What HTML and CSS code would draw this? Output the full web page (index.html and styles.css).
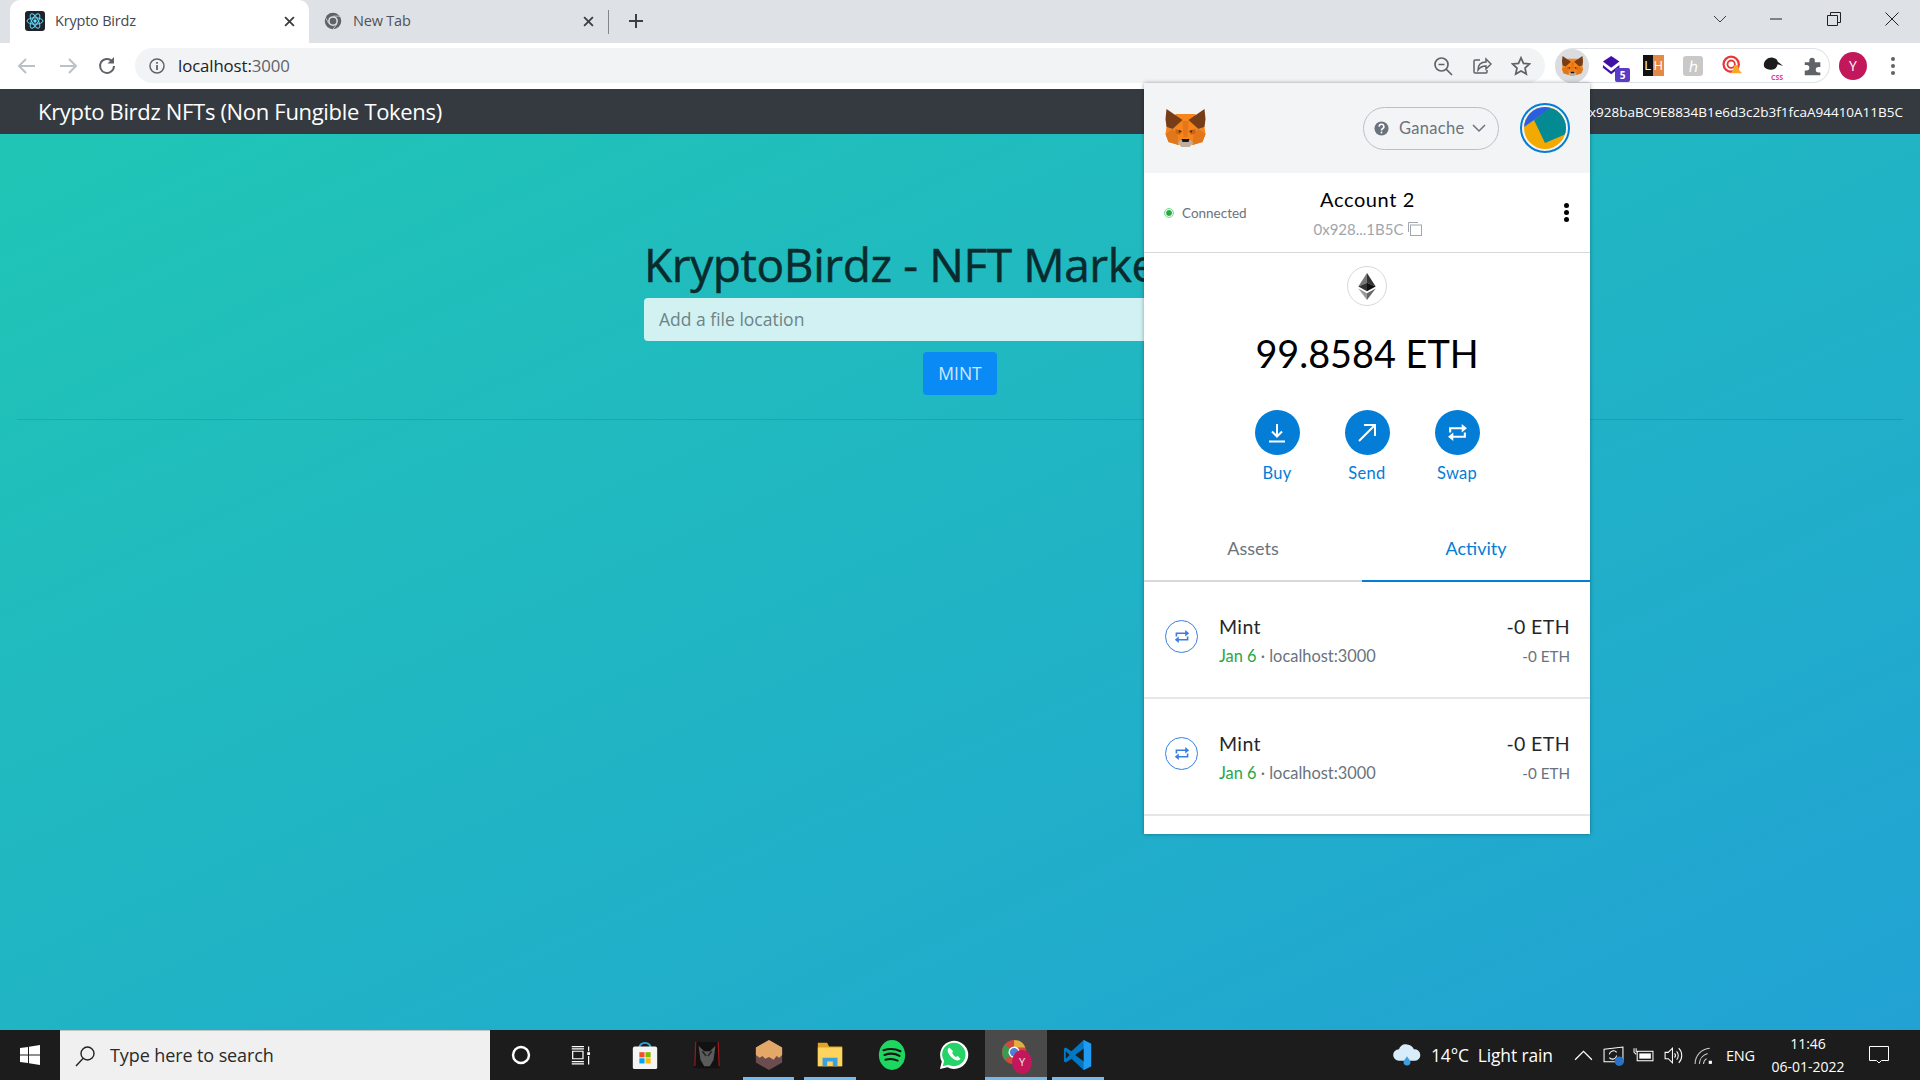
FILE: index.html
```html
<!DOCTYPE html>
<html lang="en">
<head>
<meta charset="utf-8">
<title>Krypto Birdz</title>
<link rel="stylesheet" href="styles.css">
</head>
<body>
<svg class="defs" width="0" height="0">
  <symbol id="fox" viewBox="0 0 40 38">
    <polygon fill="#f6851b" points="10,5 30,5 33,20 39,18 40,25 37,33 27,36 24,31 16,31 13,36 3,33 0,25 1,18 7,20"/>
    <polygon fill="#763d16" points="1,0 17,11 7,20 1,18 0,10"/>
    <polygon fill="#763d16" points="39,0 23,11 33,20 39,18 40,10"/>
    <polygon fill="#e2761b" points="0,25 7,20 12,25 13,36 3,33"/>
    <polygon fill="#e2761b" points="40,25 33,20 28,25 27,36 37,33"/>
    <polygon fill="#cd6116" points="10,20 17,22 14,26 10,24"/>
    <polygon fill="#cd6116" points="30,20 23,22 26,26 30,24"/>
    <polygon fill="#233447" points="13,21 16,22 14,24"/>
    <polygon fill="#233447" points="27,21 24,22 26,24"/>
    <polygon fill="#e4761b" points="17,12 23,12 22,28 18,28"/>
    <polygon fill="#c0ad9e" points="12,34 16,30 24,30 28,34 24,38 16,38"/>
    <polygon fill="#161616" points="16,30 24,30 23,33 17,33"/>
  </symbol>
  <symbol id="swap" viewBox="2 3 20 18">
    <path d="M5 12V8h12M19 12v4H7" fill="none" stroke="currentColor" stroke-width="2"/>
    <path d="M16 4l5 4-5 4zM8 12l-5 4 5 4z" fill="currentColor"/>
  </symbol>
  <symbol id="chrome" viewBox="0 0 24 24">
    <circle cx="12" cy="12" r="11" fill="#5f6368"/>
    <circle cx="12" cy="12" r="6.500" fill="#dee1e6"/>
    <circle cx="12" cy="12" r="4.500" fill="#5f6368"/>
    <path d="M12 5.500h10M6.500 15.500L1.800 7M17.500 15.500L12 23" stroke="#dee1e6" stroke-width="1"/>
  </symbol>
</svg>

<div class="tabstrip">
  <div class="tab tab-active">
    <svg class="favicon" viewBox="0 0 20 20"><rect width="20" height="20" rx="3" fill="#20232a"/><g fill="none" stroke="#61dafb" stroke-width="1"><ellipse cx="10" cy="10" rx="8" ry="3.200"/><ellipse cx="10" cy="10" rx="8" ry="3.200" transform="rotate(60 10 10)"/><ellipse cx="10" cy="10" rx="8" ry="3.200" transform="rotate(120 10 10)"/></g><circle cx="10" cy="10" r="1.700" fill="#61dafb"/></svg>
    <span class="tab-title">Krypto Birdz</span>
    <svg class="tab-x" viewBox="0 0 10 10"><path d="M1 1l8 8M9 1l-8 8" stroke="#3c4043" stroke-width="1.700"/></svg>
  </div>
  <div class="tab">
    <svg class="favicon favicon-chrome"><use href="#chrome"/></svg>
    <span class="tab-title tab-title-dim">New Tab</span>
    <svg class="tab-x" viewBox="0 0 10 10"><path d="M1 1l8 8M9 1l-8 8" stroke="#3c4043" stroke-width="1.700"/></svg>
  </div>
  <div class="tab-sep"></div>
  <svg class="new-tab" viewBox="0 0 14 14"><path d="M7 0v14M0 7h14" stroke="#3c4043" stroke-width="2"/></svg>
  <div class="win-controls">
    <svg class="win-icon" viewBox="0 0 14 14"><path d="M1 4l6 6 6-6" fill="none" stroke="#3c4043"/></svg>
    <svg class="win-icon win-min" viewBox="0 0 14 14"><path d="M1 7h12" stroke="#222"/></svg>
    <svg class="win-icon win-max" viewBox="0 0 14 14"><path d="M.5 3.500h10v10H.5zM3.500 3.500V.5h10v10h-3" fill="none" stroke="#222"/></svg>
    <svg class="win-icon win-close" viewBox="0 0 14 14"><path d="M.5.5l13 13M13.500.5l-13 13" stroke="#222"/></svg>
  </div>
</div>

<div class="toolbar">
  <svg class="nav-icon" viewBox="0 0 24 24"><path d="M20 12H5M11 5l-7 7 7 7" fill="none" stroke="#bdc1c6" stroke-width="2"/></svg>
  <svg class="nav-icon nav-forward" viewBox="0 0 24 24"><path d="M4 12h15M13 5l7 7-7 7" fill="none" stroke="#bdc1c6" stroke-width="2"/></svg>
  <svg class="nav-icon nav-reload" viewBox="0 0 24 24"><path d="M19 12a7 7 0 1 1-2-5" fill="none" stroke="#5f6368" stroke-width="2"/><path d="M19 3v6.500h-6.500z" fill="#5f6368"/></svg>
  <div class="omnibox">
    <svg class="info-icon" viewBox="0 0 16 16"><circle cx="8" cy="8" r="7" fill="none" stroke="#5f6368" stroke-width="1.500"/><path d="M8 7v5M8 4v1.800" stroke="#5f6368" stroke-width="1.800"/></svg>
    <span class="url">localhost:<span class="url-dim">3000</span></span>
    <div class="omni-actions">
      <svg class="omni-icon" viewBox="0 0 20 20"><circle cx="8.500" cy="8.500" r="6.500" fill="none" stroke="#5f6368" stroke-width="1.700"/><path d="M13 13l6 6M5.500 8.500h6" stroke="#5f6368" stroke-width="1.700"/></svg>
      <svg class="omni-icon" viewBox="0 0 20 20"><path d="M14 3l5 5-5 5v-3c-4 0-6 1-8 4 0-5 3-8 8-8zM8 4H3a1 1 0 0 0-1 1v11a1 1 0 0 0 1 1h11a1 1 0 0 0 1-1v-2" fill="none" stroke="#5f6368" stroke-width="1.500"/></svg>
      <svg class="omni-icon" viewBox="0 0 20 20"><path d="M10 1.800l2.500 5.600 6 .6-4.500 4 1.300 6L10 15l-5.300 3 1.300-6-4.500-4 6-.6z" fill="none" stroke="#5f6368" stroke-width="1.700"/></svg>
    </div>
  </div>
  <div class="ext-pill">
    <div class="ext ext-mm"><svg class="ext-fox"><use href="#fox"/></svg></div>
    <div class="ext">
      <svg class="ext-svg" viewBox="0 0 24 24"><path d="M10 1l9 6-9 7-9-7z" fill="#3f0fa8"/><path d="M1 11l9 7 9-7v3l-9 7-9-7z" fill="#3f0fa8"/></svg>
      <span class="badge-five">5</span>
    </div>
    <div class="ext"><div class="lh"><span class="lh-l">L</span><span class="lh-h">H</span></div></div>
    <div class="ext"><span class="kay">ℎ</span></div>
    <div class="ext">
      <svg class="ext-svg" viewBox="0 0 24 24"><circle cx="10" cy="10" r="9.500" fill="#e53935"/><circle cx="10" cy="10" r="7" fill="#fff"/><circle cx="10" cy="10" r="5" fill="#e53935"/><circle cx="10" cy="10" r="3" fill="#fff"/><path d="M15 11c3 0 3 3 4 6l3 3H9l3-3c1-3 0-6 3-6z" fill="#f9a825"/></svg>
    </div>
    <div class="ext">
      <svg class="ext-svg" viewBox="0 0 24 24"><path d="M2 11C2 6 7 2 12 3c4 1 5 3 5 4l6 5-6-2c-1 5-4 6-8 6-4 0-7-2-7-5z" fill="#1c1c1c"/></svg>
      <span class="css-tag">CSS</span>
    </div>
    <div class="ext"><svg class="ext-svg" viewBox="0 0 24 24"><path d="M3 8h5V6a3 3 0 0 1 6 0v2h6v5h-2a3 3 0 0 0 0 6h2v3H3v-5h2a3 3 0 0 0 0-6H3z" fill="#5f6368"/></svg></div>
  </div>
  <div class="profile">Y</div>
  <div class="kebab"><i></i><i></i><i></i></div>
</div>

<nav class="navbar">
  <span class="brand">Krypto Birdz NFTs (Non Fungible Tokens)</span>
  <span class="acct">0x928baBC9E8834B1e6d3c2b3f1fcaA94410A11B5C</span>
</nav>

<main class="main">
  <div class="mint-form">
    <h1 class="title">KryptoBirdz - NFT Marketplace</h1>
    <div class="file-input">Add a file location</div>
    <div class="btn-row"><button class="mint-btn">MINT</button></div>
  </div>
  <hr class="rule">
</main>

<div class="taskbar">
  <div class="start"><svg class="win-logo" viewBox="0 0 20 20"><path d="M0 3l8-1v7.500H0zM9 1.800L20 0v9.500H9zM0 10.500h8V18l-8-1zM9 10.500h11V20L9 18.300z" fill="#fff"/></svg></div>
  <div class="search">
    <svg class="search-icon" viewBox="0 0 22 22"><circle cx="13.500" cy="8.500" r="6.500" fill="none" stroke="#222" stroke-width="1.400"/><path d="M9 13.500L2 21" stroke="#222" stroke-width="1.400"/></svg>
    <span>Type here to search</span>
  </div>
  <div class="task"><svg class="task-svg" viewBox="0 0 32 32"><circle cx="16" cy="16" r="8.500" fill="none" stroke="#fff" stroke-width="2.600"/></svg></div>
  <div class="task"><svg class="task-svg" viewBox="2 0 32 32"><path d="M6 7h13M6 9.500h13M6 23h13M6 25.500h13M7 12h11v8H7zM24 7v5M24 17v9" fill="none" stroke="#fff" stroke-width="1.300"/><rect x="22.500" y="13" width="3" height="3" fill="#fff"/></svg></div>
  <div class="task"><svg class="task-svg" viewBox="0 0 32 32"><path d="M10 8a6 5 0 0 1 12 0" fill="none" stroke="#29a8e0" stroke-width="2"/><rect x="3" y="7" width="26" height="24" rx="2" fill="#f4f4f4"/><rect x="10" y="13" width="5.500" height="5.500" fill="#f25022"/><rect x="16.500" y="13" width="5.500" height="5.500" fill="#7fba00"/><rect x="10" y="19.500" width="5.500" height="5.500" fill="#00a4ef"/><rect x="16.500" y="19.500" width="5.500" height="5.500" fill="#ffb900"/></svg></div>
  <div class="task"><svg class="task-svg" viewBox="0 0 32 32"><path d="M4 2h24l2 28H2z" fill="#111"/><path d="M4 2l-1 26M28 2l1 26" stroke="#a01818" stroke-width="1.300"/><path d="M7 6l6 6h6l6-6-2 15-4 7h-6l-4-7z" fill="#5b5b5b"/><path d="M11 12l4 5M21 12l-4 5" stroke="#222" stroke-width="1.500"/></svg></div>
  <div class="task task-open"><svg class="task-svg" viewBox="0 0 32 32"><path d="M16 0l14 8v16l-14 8L2 24V8z" fill="#6d4c4f"/><path d="M16 0l14 8v8l-3 3-3-2-3 4-5-3-4 2-3-3-3 2-4-3V8z" fill="#e3a868"/></svg></div>
  <div class="task task-open"><svg class="task-svg" viewBox="0 0 32 32"><path d="M3 3h10l2 4h14v21H3z" fill="#e0a526"/><rect x="3" y="8" width="26" height="20" fill="#ffd45e"/><path d="M8 28v-9h16v9h-5v-5h-6v5z" fill="#3b9fe0"/></svg></div>
  <div class="task"><svg class="task-svg" viewBox="0 0 32 32"><ellipse cx="16" cy="16" rx="14" ry="16" fill="#1ed760"/><path d="M7 11c6-2 12-2 18 1M8 16c5-2 11-2 16 1M9 21c4-1 9-1 13 1" fill="none" stroke="#191414" stroke-width="2.200" stroke-linecap="round"/></svg></div>
  <div class="task"><svg class="task-svg" viewBox="0 0 32 32"><path d="M1 31l2-8A15 15 0 1 1 9 29z" fill="#fff"/><path d="M4 28l1.500-5.500A12.500 12.500 0 1 1 10 26.500z" fill="#25d366"/><path d="M11 8c-3 2-2 6 2 10s8 5 10 2l-3-3-2 1c-2-1-3-3-4-4l1-2z" fill="#fff"/></svg></div>
  <div class="task task-open task-active"><svg class="task-svg" viewBox="0 0 32 32"><circle cx="14" cy="13" r="13" fill="#d04a3c"/><path d="M14 13L4 21A13 13 0 0 1 4 5z" fill="#3a9a50"/><path d="M14 0a13 13 0 0 1 12 8H14z" fill="#e0b040"/><circle cx="14" cy="13" r="6" fill="#fff"/><circle cx="14" cy="13" r="4.500" fill="#4a80d8"/></svg><span class="chrome-y">Y</span></div>
  <div class="task task-open"><svg class="task-svg" viewBox="0 0 32 32"><path d="M22 0l8 4v24l-8 4-13-12-6 4-2-1V9l2-1 6 4z" fill="#0078c4"/><path d="M22 0l8 4v24l-8 4z" fill="#1f9cf0"/><path d="M22 9l-9 7 9 7z" fill="#1c1c1c"/><path d="M3 12v8l4-4z" fill="#1c1c1c"/></svg></div>
  <div class="tray">
    <svg class="cloud" viewBox="0 0 26 20"><path d="M6 15a5 5 0 0 1 0-10c1-3 4-5 7-4 3 0 5 2 6 4a5 5 0 0 1 1 10z" fill="#d9ecfa"/><path d="M13 11c2 3 3 4 3 5a3 3 0 0 1-6 0c0-1 1-2 3-5z" fill="#3d9fe0"/></svg>
    <span class="weather">14°C&nbsp; Light rain</span>
    <div class="tray-slot"><svg class="tray-svg" viewBox="0 0 20 20"><path d="M2 14l8-8 8 8" fill="none" stroke="#fff" stroke-width="1.200"/></svg></div>
    <div class="tray-slot"><svg class="tray-svg" viewBox="0 0 20 20"><path d="M1 4l18-2v14H1z" fill="none" stroke="#fff"/><path d="M6 9a4 4 0 0 1 7-2M13 10a4 4 0 0 1-7 2" fill="none" stroke="#fff"/><circle cx="15.500" cy="15.500" r="4.500" fill="#2a72c8"/></svg></div>
    <div class="tray-slot"><svg class="tray-svg" viewBox="0 0 20 20"><rect x="4" y="6" width="15" height="9" fill="none" stroke="#fff"/><rect x="6" y="8" width="11" height="5" fill="#fff"/><path d="M1 3v4l2 2M3 3v4" stroke="#fff"/></svg></div>
    <div class="tray-slot"><svg class="tray-svg" viewBox="0 0 20 20"><path d="M2 7h3l4-4v14l-4-4H2z" fill="none" stroke="#fff"/><path d="M11 8a3 3 0 0 1 0 4M13 6a6 6 0 0 1 0 8M15 3a10 10 0 0 1 0 14" fill="none" stroke="#fff"/></svg></div>
    <div class="tray-slot"><svg class="tray-svg" viewBox="0 0 20 20"><path d="M2 18A15 15 0 0 1 16 3M6 18A11 11 0 0 1 14 8M10 18a6 6 0 0 1 3-5" fill="none" stroke="#ccc"/><rect x="15" y="15" width="3" height="3" fill="#fff"/></svg></div>
    <span class="lang">ENG</span>
    <div class="clock"><span>11:46</span><span>06-01-2022</span></div>
    <div class="tray-slot notif"><svg class="notif-svg" viewBox="0 0 20 20"><path d="M.5 1.500h19v14h-7l-2.500 2.500-2.500-2.500h-7z" fill="none" stroke="#fff"/></svg></div>
  </div>
</div>

<aside class="popup">
  <header class="mm-head">
    <svg class="mm-fox"><use href="#fox"/></svg>
    <div class="network">
      <svg class="q-icon" viewBox="0 0 16 16"><circle cx="8" cy="8" r="7.500" fill="#6a737d"/><path d="M5.500 6a2.500 2.500 0 1 1 3.500 2.300c-.7.4-1 .8-1 1.700" fill="none" stroke="#fff" stroke-width="1.700"/><circle cx="8" cy="12.300" r="1" fill="#fff"/></svg>
      <span>Ganache</span>
      <svg class="net-chev" viewBox="0 0 14 9"><path d="M1 1l6 6 6-6" fill="none" stroke="#6a737d" stroke-width="1.500"/></svg>
    </div>
    <div class="identicon-ring">
      <svg class="identicon" viewBox="0 0 42 42"><rect width="42" height="42" fill="#f2aa03"/><polygon points="0,0 28,0 10,13 0,20" fill="#2a5fe0"/><polygon points="10,13 26,1 44,5 42,27 21,36" fill="#038a92"/></svg>
    </div>
  </header>
  <section class="mm-acct">
    <div class="conn"><span class="conn-dot"></span>Connected</div>
    <div class="acct-mid">
      <div class="acct-name">Account 2</div>
      <div class="acct-addr">0x928...1B5C<svg class="copy" viewBox="0 0 14 14"><path d="M.5 10V.5H10" fill="none" stroke="#9fa6ae"/><rect x="2.500" y="3" width="11" height="10.500" fill="none" stroke="#9fa6ae"/></svg></div>
    </div>
    <div class="acct-menu"><i></i><i></i><i></i></div>
  </section>
  <section class="mm-bal">
    <div class="eth-badge"><svg class="eth" viewBox="0 0 18 28"><polygon points="9,0 0,14 9,10" fill="#777"/><polygon points="9,0 18,14 9,10" fill="#333"/><polygon points="0,14 9,19 9,10" fill="#333"/><polygon points="18,14 9,19 9,10" fill="#111"/><polygon points="0,16 9,28 9,21" fill="#999"/><polygon points="18,16 9,28 9,21" fill="#666"/></svg></div>
    <div class="balance">99.8584 ETH</div>
    <div class="actions">
      <div class="action"><span class="action-btn"><svg class="action-svg" viewBox="0 0 24 24"><path d="M12 3v12M7 10.500l5 5 5-5M4 20.500h16" fill="none" stroke="#fff" stroke-width="2"/></svg></span><span>Buy</span></div>
      <div class="action"><span class="action-btn"><svg class="action-svg" viewBox="0 0 24 24"><path d="M4 20L20 4M9 4h11v11" fill="none" stroke="#fff" stroke-width="2"/></svg></span><span>Send</span></div>
      <div class="action"><span class="action-btn"><svg class="action-swap"><use href="#swap"/></svg></span><span>Swap</span></div>
    </div>
  </section>
  <div class="mm-tabs">
    <div class="mm-tab">Assets</div>
    <div class="mm-tab mm-tab-on">Activity</div>
  </div>
  <div class="tx">
    <span class="tx-icon"><svg class="tx-swap"><use href="#swap"/></svg></span>
    <div class="tx-main"><div class="tx-title">Mint</div><div class="tx-sub"><span class="tx-date">Jan 6</span> · localhost:3000</div></div>
    <div class="tx-amt"><div class="tx-title">-0 ETH</div><div class="tx-sub">-0 ETH</div></div>
  </div>
  <div class="tx">
    <span class="tx-icon"><svg class="tx-swap"><use href="#swap"/></svg></span>
    <div class="tx-main"><div class="tx-title">Mint</div><div class="tx-sub"><span class="tx-date">Jan 6</span> · localhost:3000</div></div>
    <div class="tx-amt"><div class="tx-title">-0 ETH</div><div class="tx-sub">-0 ETH</div></div>
  </div>
</aside>
</body>
</html>
```

FILE: styles.css
```css
* { box-sizing: border-box; }
html, body { margin: 0; padding: 0; }
body {
  position: relative;
  width: 1920px;
  height: 1080px;
  overflow: hidden;
  display: flex;
  flex-direction: column;
  font-family: "Open Sans", "Liberation Sans", sans-serif;
  background: #fff;
}
.defs { position: absolute; }

/* tab strip */
.tabstrip { height: 43px; flex: none; display: flex; align-items: center; padding-left: 10px; background: #dee1e6; }
.tab { width: 299px; height: 43px; flex: none; display: flex; align-items: center; padding: 0 14px 0 15px; }
.tab-active { background: #fff; border-radius: 10px 10px 0 0; }
.favicon { width: 20px; height: 20px; flex: none; margin-right: 10px; margin-bottom: 1px; }
.favicon-chrome { width: 18px; height: 18px; margin-right: 11px; }
.tab-title { font-size: 14.500px; line-height: 18px; color: #45494d; flex: 1; letter-spacing: -.2px; margin-bottom: 2px; }
.tab-title-dim { color: #4f5357; }
.tab-x { width: 11px; height: 11px; flex: none; }
.tab-sep { width: 1px; height: 24px; background: #80868b; flex: none; }
.new-tab { width: 14px; height: 14px; flex: none; margin-left: 20px; margin-bottom: 1px; }
.win-controls { margin-left: auto; display: flex; align-items: center; padding-right: 21px; }
.win-icon { width: 14px; height: 14px; flex: none; margin-bottom: 6px; }
.win-min { margin-left: 42px; }
.win-max { margin-left: 44px; }
.win-close { margin-left: 44px; }

/* toolbar */
.toolbar { height: 46px; flex: none; display: flex; align-items: center; padding: 0 0 1px 15px; background: #fff; }
.nav-icon { width: 24px; height: 24px; flex: none; }
.nav-forward { margin-left: 17px; }
.nav-reload { margin-left: 15px; }
.omnibox { width: 1410px; height: 35px; margin-left: 16px; flex: none; display: flex; align-items: center; padding: 0 14px 0 14px; background: #f1f3f4; border-radius: 18px; }
.info-icon { width: 16px; height: 16px; flex: none; }
.url { margin-left: 13px; font-size: 16.800px; color: #202124; letter-spacing: -.1px; }
.url-dim { color: #5f6368; }
.omni-actions { margin-left: auto; display: flex; gap: 19px; }
.omni-icon { width: 20px; height: 20px; }
.ext-pill { width: 275px; height: 35px; margin-left: 10px; flex: none; display: flex; align-items: center; border: 1px solid #dee1e6; border-left: 0; border-radius: 18px; }
.ext { position: relative; width: 40px; height: 33px; flex: none; display: flex; align-items: center; justify-content: center; }
.ext-mm { width: 34px; height: 34px; margin-right: 4px; border-radius: 50%; background: #dadce0; }
.ext-fox { width: 21px; height: 20px; }
.ext-svg { width: 22px; height: 22px; }
.badge-five { position: absolute; right: 3px; bottom: 0; width: 15px; height: 14px; border-radius: 2px; background: #5b3cc4; color: #fff; font-size: 10px; font-weight: 700; line-height: 14px; text-align: center; }
.lh { width: 21px; height: 21px; display: flex; font-size: 13px; line-height: 21px; text-align: center; }
.lh-l { flex: 1; background: #111; color: #fff; }
.lh-h { flex: 1; background: #e58a45; color: #fff; }
.kay { width: 20px; height: 20px; border-radius: 3px; background: #c8c8c8; color: #fff; font-size: 15px; line-height: 20px; text-align: center; }
.css-tag { position: absolute; left: 18px; bottom: 1px; color: #e8368f; font-size: 7px; font-weight: 700; line-height: 7px; }
.profile { width: 28px; height: 28px; margin-left: 9px; flex: none; border-radius: 50%; background: #c2185b; color: #fff; font-size: 14px; line-height: 28px; text-align: center; }
.kebab { margin-left: 24px; display: flex; flex-direction: column; gap: 3px; }
.kebab i { width: 4px; height: 4px; border-radius: 50%; background: #5f6368; }

/* page nav */
.navbar { height: 45px; flex: none; display: flex; align-items: center; justify-content: space-between; padding: 0 17px 0 38px; background: #343a40; color: #fff; }
.brand { font-size: 22px; letter-spacing: -.32px; margin-bottom: 2px; }
.acct { font-size: 13.500px; }

/* page body */
.main { flex: 1; padding: 104px 17px 0; background: linear-gradient(to bottom right, #20c6b5, #21a2d4); }
.mint-form { width: 632px; margin: 0 auto; }
.title { margin: 0 0 7px; font-size: 46px; font-weight: 400; -webkit-text-stroke: .5px #0a2b2d; line-height: 53px; color: #0a2b2d; white-space: nowrap; letter-spacing: -.4px; }
.file-input { height: 43px; padding: 0 15px; border-radius: 4px; background: rgba(255, 255, 255, .8); color: #6c8387; font-size: 17.500px; line-height: 42px; }
.btn-row { margin-top: 11px; display: flex; justify-content: center; }
.mint-btn { width: 74px; height: 43px; padding: 0 0 2px; border: 0; border-radius: 4px; background: #0a8af5; color: #cfe8fd; font: 17.500px "Open Sans", sans-serif; }
.rule { margin: 24px 0 0; border: 0; border-top: 1px solid rgba(0, 0, 0, .1); }

/* windows taskbar */
.taskbar { height: 50px; flex: none; display: flex; background: #1c1c1c; color: #fff; }
.start { width: 60px; display: flex; align-items: center; justify-content: center; }
.win-logo { width: 20px; height: 24px; }
.search { width: 430px; display: flex; align-items: center; padding-left: 14px; background: #f0f0f0; border: 1px solid #c4c4c4; border-width: 1px 0 0; color: #2a2a2a; font-size: 18px; letter-spacing: -.1px; }
.search span { margin-bottom: 2px; }
.search-icon { width: 22px; height: 22px; margin-right: 14px; }
.task { position: relative; width: 61.900px; flex: none; display: flex; align-items: center; justify-content: center; }
.task-svg { width: 30px; height: 34px; }
.task-open::after { content: ""; position: absolute; left: 5px; right: 5px; bottom: 0; height: 3px; background: #76b9ed; }
.task-active { background: #4a4a4a; }
.task-active::after { left: 0; right: 0; }
.chrome-y { position: absolute; left: 27px; top: 20px; width: 20px; height: 24px; border-radius: 50%; background: #c2185b; color: #eee; font-size: 11px; line-height: 24px; text-align: center; }
.tray { margin-left: auto; display: flex; align-items: center; padding-right: 26px; box-shadow: 4px 0 0 -3px #333; }
.cloud { width: 30px; height: 24px; margin-right: 11px; }
.weather { width: 135px; font-size: 17.400px; letter-spacing: -.1px; margin-left: -2px; margin-right: 2px; white-space: nowrap; }
.tray-slot { width: 30px; display: flex; justify-content: center; }
.tray-svg { width: 21px; height: 21px; }
.lang { width: 28px; margin-left: 8px; font-size: 14.500px; letter-spacing: -.2px; }
.clock { width: 76px; margin-left: 16px; display: flex; flex-direction: column; align-items: center; gap: 5px; font-size: 14px; line-height: 18px; }
.notif { margin-left: 18px; }
.notif-svg { width: 20px; height: 20px; }

/* wallet popup */
.popup { position: absolute; left: 1144px; top: 83px; width: 446px; height: 751px; background: #fff; font-family: Lato, "Liberation Sans", sans-serif; box-shadow: 0 0 4px rgba(0, 0, 0, .35); color: #24272a; }
.mm-head { height: 90px; display: flex; align-items: center; padding: 0 20px 0 21px; background: #f2f4f6; }
.mm-fox { width: 41px; height: 38px; flex: none; }
.network { width: 136px; height: 43px; margin-left: auto; display: flex; align-items: center; padding: 0 12px 0 10px; border: 1px solid #bbc0c5; border-radius: 22px; color: #6a737d; font-size: 16.500px; }
.network span { margin-left: 10px; letter-spacing: .3px; }
.q-icon { width: 15px; height: 15px; flex: none; }
.net-chev { width: 14px; height: 9px; margin-left: auto; }
.identicon-ring { width: 50px; height: 50px; margin-left: 21px; flex: none; display: flex; align-items: center; justify-content: center; border: 2px solid #037dd6; border-radius: 50%; }
.identicon { width: 42px; height: 42px; border-radius: 50%; }
.mm-acct { height: 80px; display: grid; grid-template-columns: 1fr auto 1fr; align-items: center; padding: 0 20px 0 21px; border-bottom: 1px solid #d6d9dc; }
.conn { display: flex; align-items: center; color: #6a737d; font-size: 13.500px; }
.conn-dot { width: 8px; height: 8px; margin: 0 9px 0 0; border-radius: 50%; background: #28a745; border: 1.500px solid #fff; outline: 1.500px solid #6fe08f; }
.acct-mid { text-align: center; }
.acct-name { font-size: 20px; line-height: 24px; color: #000; letter-spacing: .6px; }
.acct-addr { display: flex; align-items: center; margin-top: 9px; color: #9fa6ae; font-size: 15px; line-height: 18px; }
.copy { width: 14px; height: 14px; margin-left: 4px; }
.acct-menu { justify-self: end; display: flex; flex-direction: column; gap: 2px; margin-right: 1px; }
.acct-menu i { width: 5px; height: 5px; border-radius: 50%; background: #000; }
.mm-bal { height: 263px; display: flex; flex-direction: column; align-items: center; padding-top: 13px; }
.eth-badge { width: 40px; height: 40px; display: flex; align-items: center; justify-content: center; border: 1px solid #d6d9dc; border-radius: 50%; }
.eth { width: 18px; height: 27px; }
.balance { margin-top: 23px; font-size: 37.800px; line-height: 50px; color: #000; }
.actions { margin-top: 31px; display: flex; }
.action { width: 90px; display: flex; flex-direction: column; align-items: center; gap: 6px; color: #037dd6; font-size: 16.500px; line-height: 24px; letter-spacing: .3px; }
.action-btn { width: 45px; height: 45px; display: flex; align-items: center; justify-content: center; border-radius: 50%; background: #037dd6; }
.action-svg { width: 24px; height: 24px; }
.action-swap { width: 21px; height: 19px; color: #fff; }
.mm-tabs { height: 66px; display: grid; grid-template-columns: 218px 1fr; border-bottom: 2px solid #d6d9dc; }
.mm-tab { margin-bottom: -2px; text-align: center; line-height: 64px; font-size: 18px; color: #6a737d; }
.mm-tab-on { color: #037dd6; border-bottom: 2px solid #037dd6; }
.tx { height: 117px; display: flex; padding: 33px 20px 0 21px; border-bottom: 2px solid #e6e6e6; }
.tx-icon { width: 33px; height: 33px; margin-top: 5px; flex: none; display: flex; align-items: center; justify-content: center; border: 1px solid #3a7fe0; border-radius: 50%; color: #3a7fe0; }
.tx-swap { width: 16px; height: 15px; }
.tx-main { margin-left: 21px; flex: 1; }
.tx-amt { text-align: right; }
.tx-title { font-size: 19.500px; line-height: 24px; letter-spacing: .4px; color: #24272a; }
.tx-sub { margin-top: 8px; font-size: 16.400px; line-height: 18px; color: #6a737d; }
.tx-amt .tx-sub { font-size: 15.200px; }
.tx-date { color: #28a745; }
```
